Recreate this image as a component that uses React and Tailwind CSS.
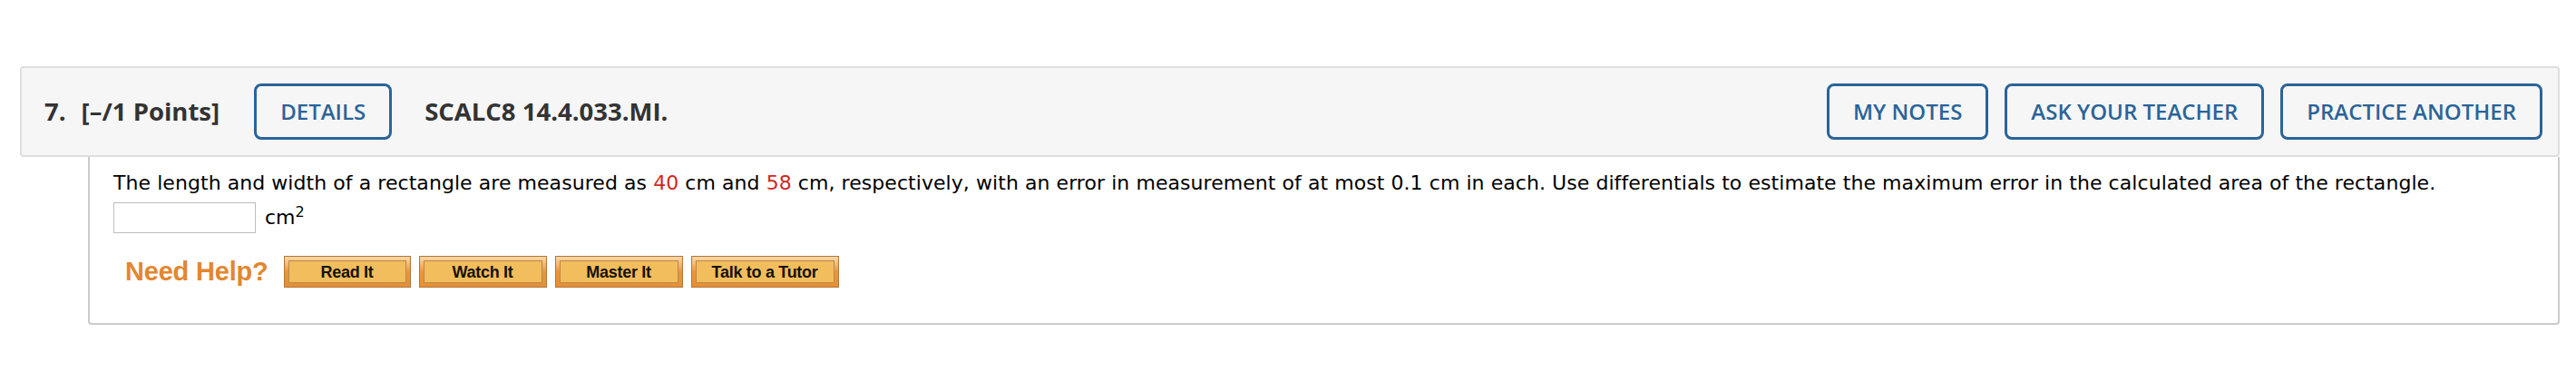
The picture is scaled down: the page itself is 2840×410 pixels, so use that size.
import React, { useState } from "react";

const outline =
  "h-[62px] px-[26px] border-[3px] border-[#2b6498] rounded-[8px] text-[#2b6498] text-[24px] font-semibold flex items-center bg-transparent";

function HelpButton({ label, width }) {
  return (
    <button
      className={
        "h-[35px] p-[4px] border border-[#b0773a] bg-gradient-to-b from-[#fbd9a6] via-[#e9963c] to-[#e58f36] " +
        width
      }
    >
      <span className="flex items-center justify-center w-full h-full border border-[#b98a4c] bg-[#f2bd5c] text-[18px] font-bold text-[#161006] leading-none tracking-[-0.3px]">
        {label}
      </span>
    </button>
  );
}

function App() {
  const [answer, setanswer] = useState("");

  return (
    <div className="w-[2840px] h-[410px] bg-white pt-[73px] pl-[22px]">
      <div className="w-[2800px]">
        {/* question header */}
        <div className="h-[100px] flex items-center justify-between bg-[#f6f6f6] border-2 border-[#dedede] rounded-[4px] pl-[25px] pr-[17px] font-['Open_Sans',sans-serif]">
          <div className="flex items-center">
            <div className="text-[27.5px] font-bold text-[#333]">
              7.<span className="ml-[17px]">[–/1 Points]</span>
            </div>
            <button className={outline + " ml-[38px]"}>DETAILS</button>
            <div className="ml-[36px] text-[27.5px] font-bold text-[#333]">
              SCALC8 14.4.033.MI.
            </div>
          </div>
          <div className="flex items-center gap-[18px]">
            <button className={outline}>MY NOTES</button>
            <button className={outline}>ASK YOUR TEACHER</button>
            <button className={outline}>PRACTICE ANOTHER</button>
          </div>
        </div>

        {/* question body */}
        <div className="ml-[75px] h-[185px] border-2 border-t-0 border-[#cbcbcb] rounded-b-[4px] pt-[14px] pl-[26px] font-['DejaVu_Sans',Verdana,sans-serif] text-[22px] text-black">
          <p className="leading-[30px] tracking-[0.06px]">
            The length and width of a rectangle are measured as{" "}
            <span className="text-[#d0271d]">40</span> cm and{" "}
            <span className="text-[#d0271d]">58</span> cm, respectively, with
            an error in measurement of at most 0.1 cm in each. Use
            differentials to estimate the maximum error in the calculated area
            of the rectangle.
          </p>
          <div className="flex items-center mt-[6px]">
            <input
              type="text"
              value={answer}
              onChange={(e) => setanswer(e.target.value)}
              className="w-[157px] h-[34px] border border-[#bdbdbd] bg-white outline-none px-1"
            />
            <span className="ml-[10px] leading-[30px]">
              cm<sup className="text-[16px]">2</sup>
            </span>
          </div>
          <div className="flex items-center mt-[21px] ml-[13px] font-['Liberation_Sans',Arial,sans-serif]">
            <span className="text-[29px] font-bold text-[#e3862f] tracking-[-0.2px]">
              Need Help?
            </span>
            <div className="flex items-center gap-[9px] ml-[17px]">
              <HelpButton label="Read It" width="w-[140px]" />
              <HelpButton label="Watch It" width="w-[141px]" />
              <HelpButton label="Master It" width="w-[141px]" />
              <HelpButton label="Talk to a Tutor" width="w-[163px]" />
            </div>
          </div>
        </div>
      </div>
    </div>
  );
}

export default App;
